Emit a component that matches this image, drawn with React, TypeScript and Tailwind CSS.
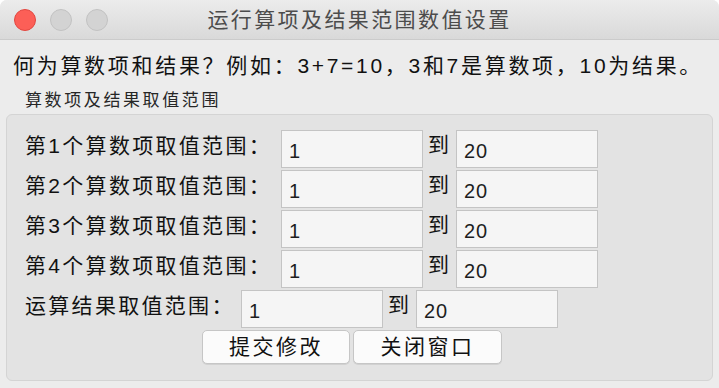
import React from 'react';

const font = { fontFamily: '"Liberation Sans", "Noto Sans CJK SC", sans-serif' };

type Row = { label: string; from: string; to: string; wide: boolean };

const rows: Row[] = [
  { label: '第1个算数项取值范围：', from: '1', to: '20', wide: true },
  { label: '第2个算数项取值范围：', from: '1', to: '20', wide: true },
  { label: '第3个算数项取值范围：', from: '1', to: '20', wide: true },
  { label: '第4个算数项取值范围：', from: '1', to: '20', wide: true },
  { label: '运算结果取值范围：', from: '1', to: '20', wide: false },
];

function Field({ value }: { value: string }) {
  return (
    <input
      readOnly
      defaultValue={value}
      className="h-[38px] w-[142px] border border-[#c4c4c4] bg-[#f5f5f5] pl-[7px] pt-[5px] text-[20px] tracking-[1px] text-[#1e1e1e] outline-none"
      style={font}
    />
  );
}

function Light({ color, ring }: { color: string; ring: string }) {
  return <span className={`block h-[22px] w-[22px] rounded-full border ${color} ${ring}`} />;
}

export default function App() {
  return (
    <div className="h-[388px] w-[719px] overflow-hidden bg-white" style={font}>
      <div className="h-full rounded-t-[7px] bg-[#ececec]">
        {/* Title bar */}
        <div className="grid h-[40px] grid-cols-[1fr_auto_1fr] items-center rounded-t-[7px] border-b border-[#cbcbcb] bg-gradient-to-b from-[#ececec] to-[#d9d9d9]">
          <div className="flex items-center gap-[14px] pl-[14px]">
            <Light color="bg-[#fc5f57]" ring="border-[#e2463f]" />
            <Light color="bg-[#d3d3d3]" ring="border-[#c2c2c2]" />
            <Light color="bg-[#d3d3d3]" ring="border-[#c2c2c2]" />
          </div>
          <div className="text-[21px] leading-[28px] tracking-[2.4px] text-[#4c4c4c]">运行算项及结果范围数值设置</div>
          <div />
        </div>

        {/* Intro line */}
        <div className="mt-[12px] pl-[13px] text-[21px] leading-[28px] tracking-[2.7px] text-[#111111]">
          何为算数项和结果？例如：3+7=10，3和7是算数项，10为结果。
        </div>

        {/* Group */}
        <div className="mt-[10px] pl-[25px] text-[17px] leading-[22px] tracking-[2.6px] text-[#262626]">算数项及结果取值范围</div>
        <div className="mx-[6px] mt-[2px] h-[267px] rounded-[6px] border border-[#d4d4d4] bg-[#e3e3e3] pl-[18px] pt-[15px]">
          <div className="flex flex-col gap-[2px]">
            {rows.map((r, i) => (
              <div key={i} className="flex items-center">
                <div className={`${r.wide ? 'w-[256px]' : 'w-[216px]'} pb-[6px] text-[21px] leading-[28px] tracking-[2.3px] text-[#111111]`}>
                  {r.label}
                </div>
                <Field value={r.from} />
                <span className="ml-[5px] mr-[7px] pb-[8px] text-[21px] leading-[28px] text-[#111111]">到</span>
                <Field value={r.to} />
              </div>
            ))}
          </div>
          <div className="mt-[2px] flex gap-[3px] pl-[177px]">
            <button className="h-[34px] w-[148px] rounded-[5px] border border-[#c6c6c6] bg-[#fbfbfb] text-[21px] tracking-[2.5px] text-[#111111] shadow-[0_1px_0_rgba(0,0,0,0.08)]">
              提交修改
            </button>
            <button className="h-[34px] w-[149px] rounded-[5px] border border-[#c6c6c6] bg-[#fbfbfb] text-[21px] tracking-[2.5px] text-[#111111] shadow-[0_1px_0_rgba(0,0,0,0.08)]">
              关闭窗口
            </button>
          </div>
        </div>
      </div>
    </div>
  );
}
